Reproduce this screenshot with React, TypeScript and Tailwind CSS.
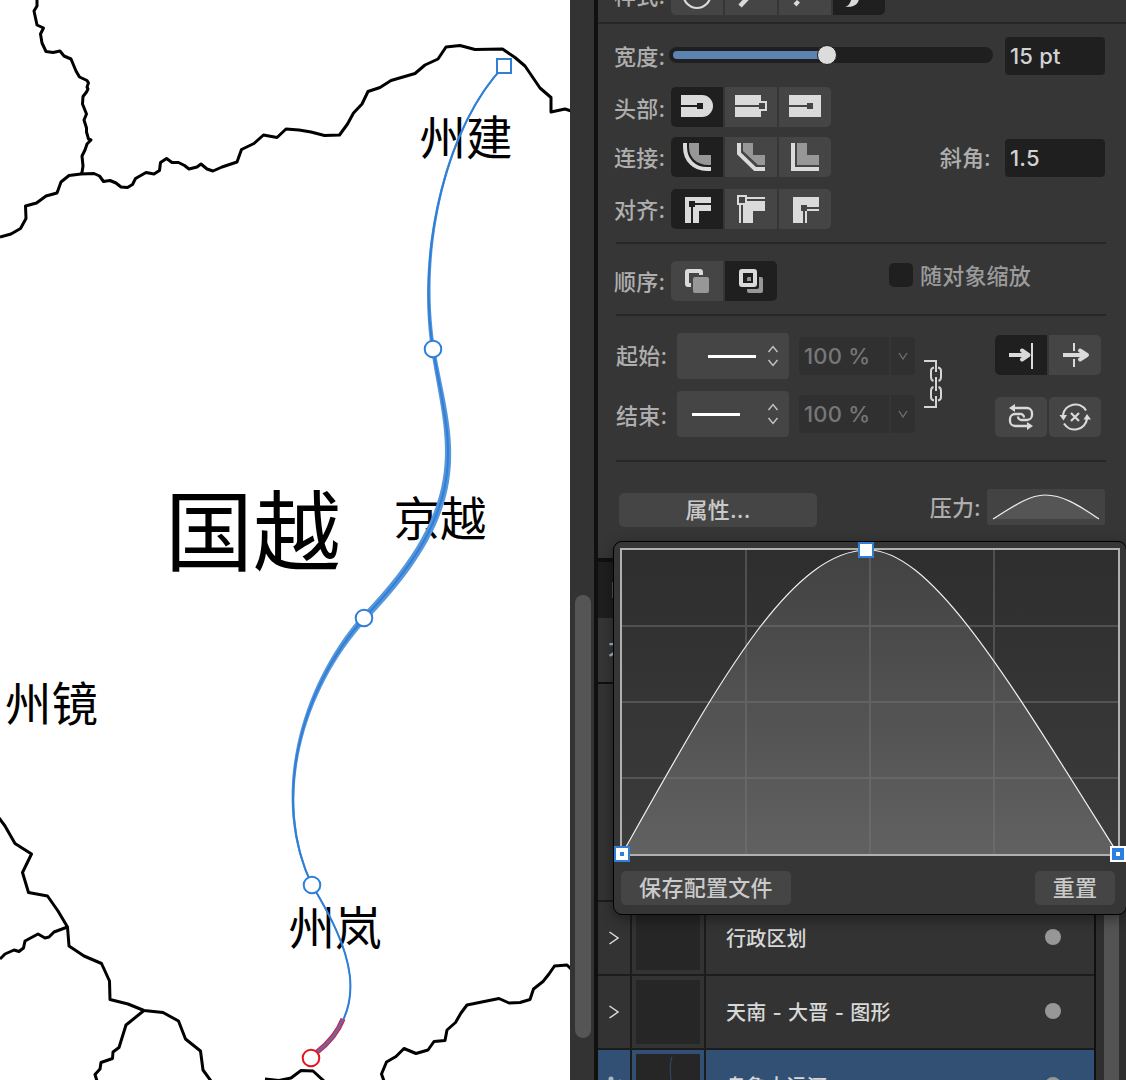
import React from "react";

const light = "#dadada";
const dim = "#979797";

function Divider({ className = "" }: { className?: string }) {
  return <div className={`h-[2px] shrink-0 bg-[#272727] ${className}`} />;
}

function Segment({
  active,
  pos,
  children,
}: {
  active?: boolean;
  pos?: "l" | "r" | "both";
  children: React.ReactNode;
}) {
  const radius =
    pos === "l" ? "rounded-l-[5px]" : pos === "r" ? "rounded-r-[5px]" : pos === "both" ? "rounded-[5px]" : "";
  return (
    <div className={`h-[40px] w-[52px] ${radius} ${active ? "bg-[#1f1f1f]" : "bg-[#454545]"}`}>
      <svg width="52" height="40" viewBox="0 0 52 40" fill="none">
        {children}
      </svg>
    </div>
  );
}

function Label({ children, className = "" }: { children: React.ReactNode; className?: string }) {
  return (
    <div className={`shrink-0 whitespace-nowrap text-[22px] leading-[40px] tracking-[0.2px] text-[#aeaeae] ${className}`}>
      {children}
    </div>
  );
}

function Field({ children }: { children: React.ReactNode }) {
  return (
    <div className="h-[38px] w-[100px] rounded-[4px] bg-[#1f1f1f] pl-[5px] text-[22px] leading-[39px] tracking-[0.2px] text-[#d2d2d2]">
      {children}
    </div>
  );
}

const borders = [
  "M37 0V6L34 11L37 25L43.500 28L40.500 34L42 43L46 51.500L53 52.500L60 51L64 56L71 59L76 71L79.500 77L87 80.500L88.500 83L87 87L88 89L86.500 92L83 96.500L82.500 104L86.500 114L84 120L86.500 128V132L88.500 139L91 140L87 144L85 150L82 156L83 166L82 172.500L81 174",
  "M0 237L11 234L20.500 228.500L26 218.500L25.500 206L36.500 203L46 196L57 193L61 182L69 175.500L81 174L94 173.500L99.500 176L103.500 181.500L110 180.500L116 183L121 187L127.500 187.500L132.500 184.500L135.500 178.500L146 172.500L154 174L159.500 170.500L160.500 162.500L166.500 158.500L172 162.500L178.500 162.500L184.500 165.500L189 169L197 167L201 164L207 169L213 171L222 167L237 162L241.500 149.500L254 143.500L263.500 135L277 137.500L286 129L299 130L311 132L324.500 135.500L339.500 135L347.500 124L353.500 113L362 104L368 91.500L380 87.500L391 80.500L415 73.500L425 65L438 59L446 47L460 45.500L475 49.500L502.500 49L515 57.500L525 66L540 88L551 97.500V112L565 109L571 111",
  "M-1 818L5 826L15 843.500L31.500 854L22.500 872.500L28.500 892.500L47.500 896L58 911L67.500 927L69 946L84 956L101.500 963.500L109.500 981L110 999.500L128 1004L144 1010.500L163 1012.500L178.500 1021L185.500 1039L200.500 1051L203 1070L211 1081",
  "M67.500 927L54 932L49 937L45 938L38 934L25 941L23.500 948L19 951.500L14 950L5 954L0 959",
  "M144 1010.500L126 1025L119 1047.500L113 1052L112.500 1058.500L101 1062.500L100 1069L95 1074.500L97 1081",
  "M265 1079L279 1080.500L291 1078L301 1070.500L313 1071L324 1081",
  "M384 1081L381.500 1074L386.500 1062L396 1056.500L404 1048.500L416 1053.500L428 1050L434 1041.500L445 1040.500L447 1030L455.500 1022.500L461 1013L467 1005L499 998.500L509 1003L520 1002.500L530 999.500L533.500 989L543 981.500L549 974L554.500 966L567 965L571 969",
];

type Bezier = [number, number, number, number, number, number, number, number];

const river: Bezier[] = [
  [504, 66, 448, 124, 417, 245, 433, 349],
  [433, 349, 448, 440, 478, 500, 364, 618],
  [364, 618, 300, 690, 271, 800, 312, 885],
  [312, 885, 348, 945, 377, 1008, 311, 1058],
];

// Stroke width at each node; the pressure profile peaks halfway along the river.
const widths: [number, number][] = [
  [1.2, 4.2],
  [4.2, 7],
  [7, 1.6],
  [1.6, 1],
];

function ribbon(b: Bezier, [w0, w1]: [number, number], bulge: number) {
  const left: string[] = [];
  const right: string[] = [];
  for (let i = 0; i <= 32; i++) {
    const t = i / 32;
    const u = 1 - t;
    const x = u * u * u * b[0] + 3 * u * u * t * b[2] + 3 * u * t * t * b[4] + t * t * t * b[6];
    const y = u * u * u * b[1] + 3 * u * u * t * b[3] + 3 * u * t * t * b[5] + t * t * t * b[7];
    const dx = u * u * (b[2] - b[0]) + 2 * u * t * (b[4] - b[2]) + t * t * (b[6] - b[4]);
    const dy = u * u * (b[3] - b[1]) + 2 * u * t * (b[5] - b[3]) + t * t * (b[7] - b[5]);
    const len = Math.hypot(dx, dy);
    const h = (w0 + (w1 - w0) * t + bulge * 4 * u * t) / 2;
    left.push(`${(x - (dy / len) * h).toFixed(2)} ${(y + (dx / len) * h).toFixed(2)}`);
    right.unshift(`${(x + (dy / len) * h).toFixed(2)} ${(y - (dx / len) * h).toFixed(2)}`);
  }
  return `M${left.join("L")}L${right.join("L")}Z`;
}

const bulges = [-0.3, 0.9, -0.6, 0];

function MapCanvas() {
  return (
    <svg width="570" height="1080" viewBox="0 0 570 1080" className="shrink-0 bg-white" fill="none">
      <g stroke="#000" strokeWidth="3" strokeLinejoin="round">
        {borders.map((d, i) => (
          <path key={i} d={d} />
        ))}
      </g>
      <g fill="#000" fontFamily='"Noto Sans CJK SC", sans-serif' fontSize="46.500" fontWeight="400">
        <text x="419.500" y="154.500">州建</text>
        <text x="393.500" y="535.500">京越</text>
        <text x="5" y="720.500">州镜</text>
        <text x="288.500" y="944.500">州岚</text>
        <text x="165" y="564" fontSize="88">国越</text>
      </g>
      <g fill="#5796da">
        {river.map((b, i) => (
          <path key={i} d={ribbon(b, widths[i], bulges[i])} />
        ))}
      </g>
      <g stroke="#2f7fd9" strokeWidth="2">
        {river.map((b, i) => (
          <path key={i} d={`M${b[0]} ${b[1]}C${b.slice(2).join(" ")}`} />
        ))}
      </g>
      <path d="M343 1019C338 1032 329 1043 316 1053" stroke="#d3203f" strokeWidth="5" />
      <path d="M343 1019C338 1032 329 1043 316 1053" stroke="#75629b" strokeWidth="3" />
      <g fill="#fff" stroke="#2f7fd9" strokeWidth="2">
        <rect x="497" y="59" width="14" height="14" />
        <circle cx="433" cy="349" r="8.300" />
        <circle cx="364" cy="618" r="8.300" />
        <circle cx="312" cy="885" r="8.300" />
        <circle cx="311" cy="1058" r="8.300" stroke="#e8121c" />
      </g>
    </svg>
  );
}

function ArrowPicker({ shift }: { shift: string }) {
  return (
    <div className="flex h-[46px] w-[112px] items-center rounded-[4px] bg-[#454545]">
      <div className={`h-[3px] w-[48px] bg-white ${shift}`} />
      <svg width="12" height="22" viewBox="0 0 12 22" fill="none" stroke="#c6c6c6" strokeWidth="1.400" className="ml-auto mr-[10px]">
        <path d="M1.500 7L6 1.500L10.500 7M1.500 15L6 20.500L10.500 15" />
      </svg>
    </div>
  );
}

function Percent() {
  return (
    <div className="ml-[10px] flex h-[38px] gap-[2px] text-[22px] leading-[39px] tracking-[0.2px] text-[#777]">
      <div className="w-[90px] rounded-l-[4px] bg-[#303030] pl-[5px]">100 %</div>
      <div className="flex w-[24px] items-center justify-center rounded-r-[4px] bg-[#303030]">
        <svg width="10" height="8" viewBox="0 0 10 8" fill="none" stroke="#707070" strokeWidth="1.300">
          <path d="M1 1L5 7L9 1" />
        </svg>
      </div>
    </div>
  );
}

function StrokePanel() {
  return (
    <div className="flex h-[558px] shrink-0 flex-col overflow-hidden bg-[#363636]">
      <div className="-mt-[25px] flex h-[40px] shrink-0 pl-4">
        <Label className="w-[57px] pt-px">样式:</Label>
        <div className="flex gap-[2px]">
          <Segment pos="l">
            <circle cx="26" cy="19.500" r="13.500" stroke={light} strokeWidth="2.200" />
          </Segment>
          <Segment>
            <path d="M15 31L29 16" stroke={light} strokeWidth="4.500" />
          </Segment>
          <Segment>
            <path d="M14.500 28.500L18 25L21 27.500L17.500 31.500Z" fill={light} />
          </Segment>
          <Segment active pos="r">
            <path d="M12 31.500C17 31 17 27 19 23H26C26 28 22 33 12 31.500Z" fill={light} />
          </Segment>
        </div>
      </div>
      <Divider className="mt-[7px]" />
      <div className="mt-[13px] flex h-[38px] shrink-0 items-center pl-4">
        <Label className="w-[55px] pt-px">宽度:</Label>
        <div className="-mt-[2px] flex h-[16px] w-[324px] items-center rounded-full bg-[#1f1f1f] pl-[4px]">
          <div className="h-[8px] w-[146px] rounded-l-full bg-[#5d84b1]" />
          <div className="-ml-[2px] size-[20px] shrink-0 rounded-full border border-[#202020] bg-[#dcdcdc]" />
        </div>
        <div className="ml-[12px]">
          <Field>15 pt</Field>
        </div>
      </div>
      <div className="mt-[12px] flex h-[40px] shrink-0 pl-4">
        <Label className="w-[57px] pt-[2px]">头部:</Label>
        <div className="flex gap-[2px]">
          <Segment active pos="l">
            <path d="M10 8H31A11 11 0 0 1 31 30H10Z" fill={light} />
            <path d="M10 18H26V16H32V22H26V20H10Z" fill="#1f1f1f" />
          </Segment>
          <Segment>
            <path d="M10 8H36V30H10Z" fill={light} />
            <rect x="33" y="15" width="8" height="8" fill="#454545" stroke={light} strokeWidth="2" />
            <path d="M10 18H34V20H10Z" fill="#454545" />
          </Segment>
          <Segment pos="r">
            <path d="M10 8H42V30H10Z" fill={light} />
            <path d="M10 18H28V16H34V22H28V20H10Z" fill="#454545" />
          </Segment>
        </div>
      </div>
      <div className="mt-[10px] flex h-[40px] shrink-0 items-center pl-4">
        <Label className="w-[57px] pt-[2px]">连接:</Label>
        <div className="flex gap-[2px]">
          <Segment active pos="l">
            <path d="M18 6H28V18H40V28H38C25 28 18 20 18 10Z" fill={dim} />
            <path d="M14 6V10C14 23 23 32 36 32H40" stroke={light} strokeWidth="4" />
          </Segment>
          <Segment>
            <path d="M18 6H28V18H40V28H33L18 14Z" fill={dim} />
            <path d="M14 6V16.500L30 32H40" stroke={light} strokeWidth="4" />
          </Segment>
          <Segment pos="r">
            <path d="M18 6H28V18H40V28H18Z" fill={dim} />
            <path d="M14 6V32H40" stroke={light} strokeWidth="4" />
          </Segment>
        </div>
        <Label className="ml-auto mr-[14px] pt-[2px]">斜角:</Label>
        <div className="mr-[21px] mt-[2px]">
          <Field>1.5</Field>
        </div>
      </div>
      <div className="mt-[12px] flex h-[40px] shrink-0 pl-4">
        <Label className="w-[57px] pt-px">对齐:</Label>
        <div className="flex gap-[2px]">
          <Segment active pos="l">
            <path d="M14 8H40V22H28V34H14Z" fill={light} />
            <path d="M18 12H24V14H40V16H24V18H22V34H20V18H18Z" fill="#1f1f1f" />
          </Segment>
          <Segment>
            <path d="M22 8H40V10H22ZM14 16H16V34H14ZM22 12H40V22H28V34H18V16H22Z" fill={light} />
            <rect x="13" y="7" width="8" height="8" stroke={light} strokeWidth="2" />
          </Segment>
          <Segment pos="r">
            <path d="M14 8H40V18H28V16H22V22H24V34H14ZM28 20H40V22H28V34H26V22H28Z" fill={light} />
          </Segment>
        </div>
      </div>
      <Divider className="ml-[18px] mr-[20px] mt-[13px]" />
      <div className="mt-[17px] flex h-[40px] shrink-0 pl-4">
        <Label className="w-[57px] pt-px">顺序:</Label>
        <div className="flex gap-[2px]">
          <Segment pos="l">
            <rect x="16" y="10" width="14" height="14" rx="1" stroke={light} strokeWidth="4" />
            <path d="M20 14H40V34H20Z" fill="#454545" />
            <rect x="22" y="16" width="16" height="16" rx="2" fill={dim} />
          </Segment>
          <Segment active pos="r">
            <rect x="22" y="16" width="16" height="16" rx="2" fill={dim} />
            <rect x="13" y="7" width="21" height="21" rx="2" fill="#1f1f1f" />
            <rect x="16" y="10" width="14" height="14" rx="1" stroke={light} strokeWidth="4" />
            <path d="M22 20V17L23 16H26V20Z" fill={dim} />
          </Segment>
        </div>
        <div className="ml-[112px] mt-[2px] size-[24px] rounded-[5px] bg-[#1f1f1f]" />
        <Label className="-mt-[5px] ml-[7px] !text-[#9b9b9b]">随对象缩放</Label>
      </div>
      <Divider className="ml-[18px] mr-[20px] mt-[13px]" />
      <div className="mt-[17px] flex h-[104px] shrink-0 pl-[18px]">
        <div className="flex flex-col gap-[12px]">
          <div className="flex h-[46px] items-center">
            <Label className="w-[61px]">起始:</Label>
            <ArrowPicker shift="ml-[31px]" />
            <Percent />
          </div>
          <div className="flex h-[46px] items-center">
            <Label className="w-[61px] pt-[4px]">结束:</Label>
            <ArrowPicker shift="ml-[15px]" />
            <Percent />
          </div>
        </div>
        <svg width="22" height="50" viewBox="0 0 22 50" fill="none" stroke="#d5d5d5" strokeWidth="2" className="ml-[8px] mt-[26px]">
          <path d="M1 2H13V13M1 48H13V37M13 18V32" />
          <path d="M11 8.500C8.500 9 8 10 8 12V18C8 20 8.500 21.500 10.500 22M15 8.500C17.500 9 18 10 18 12V18C18 20 17.500 21.500 15.500 22" />
          <path d="M10.500 28C8.500 28.500 8 30 8 32V38C8 40 8.500 41 11 41.500M15.500 28C17.500 28.500 18 30 18 32V38C18 40 17.500 41 15 41.500" />
        </svg>
        <div className="ml-auto mr-[25px] mt-[2px] flex flex-col gap-[22px]">
          <div className="flex gap-[2px]">
            <Segment active pos="l">
              <path d="M14 20H33" stroke={light} strokeWidth="4" />
              <path d="M27 15.500L33.500 20L27 24.500" stroke={light} strokeWidth="4" strokeLinecap="round" strokeLinejoin="round" />
              <path d="M37 8V34" stroke={light} strokeWidth="2" />
            </Segment>
            <Segment pos="r">
              <path d="M14 20H37" stroke={light} strokeWidth="4" />
              <path d="M31 15.500L38 20L31 24.500" stroke={light} strokeWidth="4" strokeLinecap="round" strokeLinejoin="round" />
              <path d="M25 8V16M25 24V32" stroke={light} strokeWidth="2" />
            </Segment>
          </div>
          <div className="flex gap-[2px]">
            <Segment pos="both">
              <path
                d="M18 11H32A5 5 0 0 1 37 16V18A5 5 0 0 1 32 23H27A3.500 3.500 0 0 1 23 19.500M34 29H20A5 5 0 0 1 15 24V22A5 5 0 0 1 20 17H25A3.500 3.500 0 0 1 29 20.500"
                stroke={light}
                strokeWidth="2.300"
              />
              <path d="M14 11L20 7V15ZM38 29L32 25V33Z" fill={light} />
            </Segment>
            <Segment pos="both">
              <path d="M14 18A12.500 12.500 0 0 1 37 13.500M38 22A12.500 12.500 0 0 1 15 26.500" stroke={light} strokeWidth="2.200" />
              <path d="M22 16L30 24M30 16L22 24" stroke={light} strokeWidth="2.200" />
              <path d="M10.500 18H18L14.500 23.500ZM34.500 22.500H42L38 17Z" fill={light} />
            </Segment>
          </div>
        </div>
      </div>
      <Divider className="ml-[18px] mr-[20px] mt-[23px]" />
      <div className="mt-[27px] flex h-[38px] shrink-0 pl-[21px]">
        <div className="mt-[4px] h-[34px] w-[198px] rounded-[5px] bg-[#454545] text-center text-[22px] leading-[34px] tracking-[0.2px] text-[#cacaca]">
          属性...
        </div>
        <Label className="-mt-px ml-auto mr-[6px]">压力:</Label>
        <svg width="118" height="36" viewBox="0 0 118 36" className="mr-[21px] rounded-[3px] bg-[#434343]">
          <path d="M6 30C28 16 43 6 58 6C75 6 90 15 112 30Z" fill="#555" />
          <path d="M6 30C28 16 43 6 58 6C75 6 90 15 112 30" fill="none" stroke="#eee" strokeWidth="1.200" />
        </svg>
      </div>
    </div>
  );
}

function LayerRow({ name, selected }: { name: string; selected?: boolean }) {
  const bg = selected ? "bg-[#325073]" : "bg-[#333]";
  return (
    <div className="flex h-[72px] shrink-0 gap-[2px]">
      <div className={`flex w-[32px] items-center justify-center ${bg}`}>
        {selected ? (
          <svg width="20" height="26" viewBox="0 0 20 26" fill="none" stroke="#a9b6c6" strokeWidth="2" className="mt-[4px]">
            <circle cx="7" cy="4" r="1.500" fill="#a9b6c6" />
            <path d="M7 4L8 14M17 5.500C12 6 10 9 8 14L3 9M8 14V24" />
          </svg>
        ) : (
          <svg width="12" height="14" viewBox="0 0 12 14" fill="none" stroke="#ddd" strokeWidth="1.500">
            <path d="M1.500 1L10 7L1.500 13" />
          </svg>
        )}
      </div>
      <div className={`flex w-[72px] items-center justify-center ${bg}`}>
        <div className="size-[64px] bg-[#262626]">
          {selected && (
            <svg width="64" height="64" viewBox="0 0 64 64" fill="none" stroke="#33435e" strokeWidth="1.200">
              <path d="M36 3C32 14 36 24 35 36" />
            </svg>
          )}
        </div>
      </div>
      <div className={`flex flex-1 items-center pl-[20px] pr-[33px] text-[20px] tracking-[0.2px] text-[#d8d8d8] [word-spacing:0.6px] ${bg}`}>
        <span className="pt-[2px]">{name}</span>
        <span className="-mt-[2px] ml-auto size-[16px] rounded-full bg-[#979797]" />
      </div>
    </div>
  );
}

function LayersPanel() {
  return (
    <div className="mt-[4px] flex flex-1 flex-col overflow-hidden">
      <div className="flex h-[56px] shrink-0 items-center bg-[#1f1f1f] pl-[14px]">
        <div className="h-[16px] w-px bg-[#555]" />
      </div>
      <div className="h-[64px] shrink-0 bg-[#363636] pl-[10px] text-[22px] leading-[68px] text-[#b3b3b3]">不</div>
      <div className="mt-[2px] flex flex-1">
        <div className="flex w-[496px] flex-col gap-[2px] bg-[#1c1c1c]">
          <div className="h-[216px] shrink-0 bg-[#333]" />
          <LayerRow name="行政区划" />
          <LayerRow name="天南 - 大晋 - 图形" />
          <LayerRow name="乌鲁大运河" selected />
        </div>
        <div className="ml-[2px] flex flex-1 bg-[#2f2f2f] pl-[8px]">
          <div className="w-[15px] bg-[#535353]" />
        </div>
      </div>
    </div>
  );
}

function PressurePopup() {
  const curve = "M0 304C95 135 168 0 246 0C310 0 387 130 496 304";
  return (
    <div className="absolute left-[15px] top-[541px] h-[374px] w-[514px] rounded-[9px] border border-black bg-[#363636] shadow-[0_4px_14px_rgba(0,0,0,0.4)]">
      <div className="ml-[6px] mt-[6px] h-[308px] w-[500px] border-2 border-[#b0b0b0] bg-gradient-to-b from-[#2e2e2e] to-[#3c3c3c]">
        <svg width="496" height="304" viewBox="0 0 496 304" fill="none" className="overflow-visible">
          <defs>
            <linearGradient id="area" x1="0" y1="0" x2="0" y2="1">
              <stop offset="0" stopColor="#424242" />
              <stop offset="1" stopColor="#616161" />
            </linearGradient>
          </defs>
          <path d={`${curve}Z`} fill="url(#area)" />
          <path d="M124 0V304M248 0V304M372 0V304M0 76H496M0 152H496M0 228H496" stroke="#777" strokeOpacity="0.45" strokeWidth="2" />
          <path d={curve} stroke="#f0f0f0" strokeWidth="1.200" />
          <rect x="237" y="-7" width="14" height="14" fill="#fff" stroke="#2f7fd9" strokeWidth="2" />
          <rect x="-7" y="297" width="14" height="14" fill="#fff" stroke="#2f7fd9" strokeWidth="2" />
          <rect x="-2" y="302" width="4" height="4" fill="#2f7fd9" />
          <rect x="489" y="297" width="14" height="14" fill="#2b7fe0" stroke="#fff" strokeWidth="2" />
          <rect x="494" y="302" width="4" height="4" fill="#fff" />
        </svg>
      </div>
      <div className="mt-[15px] flex justify-between pl-[7px] pr-[11px] text-[22px] leading-[34px] tracking-[0.3px] text-[#cacaca]">
        <div className="h-[34px] w-[170px] rounded-[5px] bg-[#454545] text-center">保存配置文件</div>
        <div className="h-[34px] w-[80px] rounded-[5px] bg-[#454545] text-center">重置</div>
      </div>
    </div>
  );
}

export default function App() {
  return (
    <div className='flex h-[1080px] w-[1126px] overflow-hidden bg-[#101010] font-["Inter","Noto_Sans_CJK_SC",sans-serif] font-medium'>
      <MapCanvas />
      <div className="flex w-[24px] shrink-0 flex-col items-center bg-[#333] pl-[2px] pt-[595px]">
        <div className="h-[443px] w-[16px] rounded-full bg-[#555]" />
      </div>
      <div className="relative ml-[4px] flex w-[528px] shrink-0 flex-col">
        <StrokePanel />
        <LayersPanel />
        <PressurePopup />
      </div>
    </div>
  );
}
